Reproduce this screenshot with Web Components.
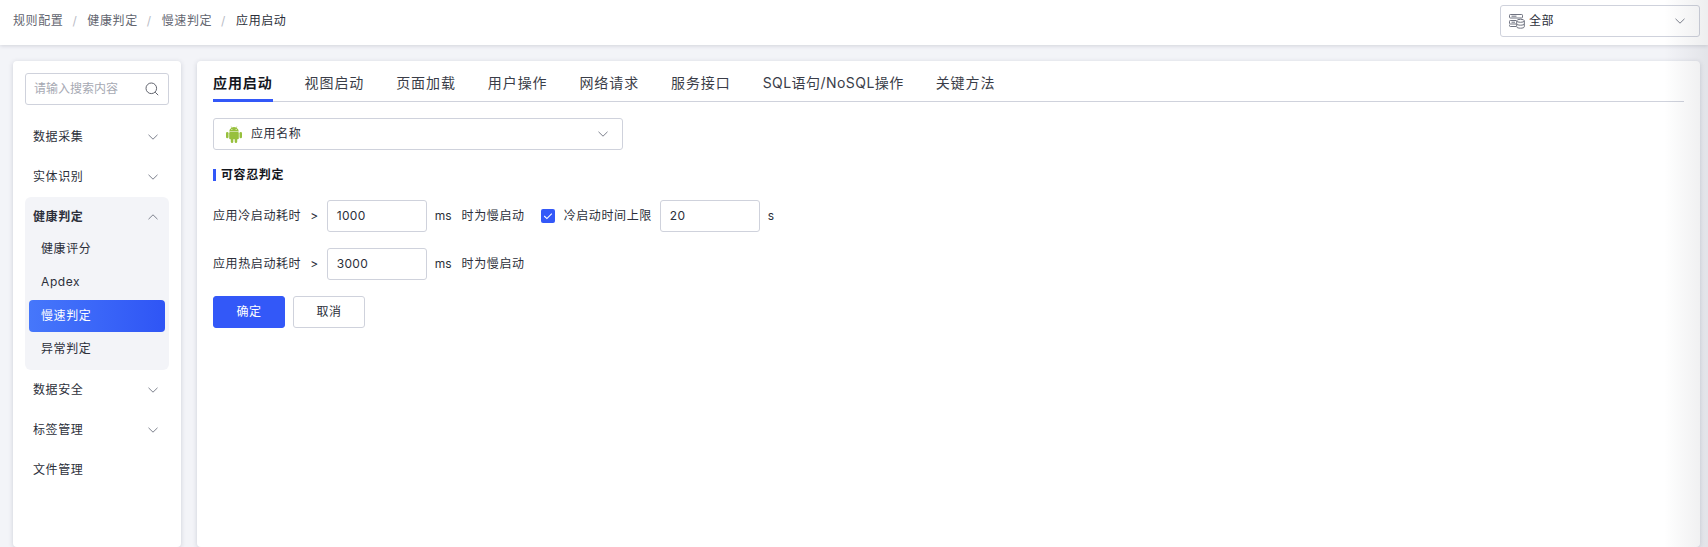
<!DOCTYPE html>
<html lang="zh-CN">
  <head>
    <meta charset="UTF-8">
    <title>应用启动</title>
    <style>
      html, body {
        margin: 0;
        height: 100%;
        overflow: hidden;
      }

      body {
        position: relative;
        background: #f3f4f8;
        color: #2c2f3a;
        font: 12px/16px Inter, "Noto Sans CJK SC", sans-serif;
      }

      /* soft shade down the right edge of the window */
      body::after {
        content: "";
        position: absolute;
        top: 0;
        right: 0;
        bottom: 0;
        width: 44px;
        background: linear-gradient(90deg, rgba(30, 34, 50, 0), rgba(30, 34, 50, 0.08));
        pointer-events: none;
      }

      .layout {
        display: flex;
        gap: 16px;
        padding: 16px 8px 0 13px;
        height: 486px;
        overflow: hidden;
      }
    </style>
  </head>

  <body>
    <top-bar>
      <crumb-item>规则配置</crumb-item>
      <crumb-item>健康判定</crumb-item>
      <crumb-item>慢速判定</crumb-item>
      <crumb-item current>应用启动</crumb-item>
    </top-bar>

    <div class="layout">
      <side-nav>
        <nav-item arrow="down">数据采集</nav-item>
        <nav-item arrow="down">实体识别</nav-item>
        <nav-group label="健康判定">
          <nav-sub>健康评分</nav-sub>
          <nav-sub>Apdex</nav-sub>
          <nav-sub active>慢速判定</nav-sub>
          <nav-sub>异常判定</nav-sub>
        </nav-group>
        <nav-item arrow="down">数据安全</nav-item>
        <nav-item arrow="down">标签管理</nav-item>
        <nav-item>文件管理</nav-item>
      </side-nav>

      <rule-panel></rule-panel>
    </div>

    <script>
      const CHEVRON_DOWN = '<svg width="14" height="14" viewBox="0 0 14 14" fill="none" stroke="#7d818d" stroke-width="1"><path d="M2.5 4.8 7 9.2l4.5-4.4"/></svg>';
      const CHEVRON_UP = '<svg width="14" height="14" viewBox="0 0 14 14" fill="none" stroke="#7d818d" stroke-width="1"><path d="M2.5 9.2 7 4.8l4.5 4.4"/></svg>';

      class TopBar extends HTMLElement {
        constructor() {
          super();
          this.attachShadow({ mode: 'open' }).innerHTML = `
            <style>
              :host {
                display: flex;
                position: relative;
                align-items: center;
                justify-content: space-between;
                height: 45px;
                box-sizing: border-box;
                padding: 0 8px 4px 13px;
                background: #fff;
                box-shadow: 0 1px 4px rgba(40, 44, 70, 0.16);
              }
              .crumbs { display: flex; }
              .scope {
                display: flex;
                align-items: center;
                width: 200px;
                height: 32px;
                box-sizing: border-box;
                padding: 0 12px 0 8px;
                border: 1px solid #cfd2dc;
                border-radius: 3px;
                letter-spacing: 0.6px;
              }
              .scope span { flex: 1; margin-left: 4px; }
              svg { display: block; }
            </style>
            <div class="crumbs"><slot></slot></div>
            <div class="scope">
              <svg width="16" height="16" viewBox="0 0 16 16" fill="none" stroke="#6f7380" stroke-width="1">
                <rect x="0.5" y="1.5" width="13" height="3.5" rx="0.8"/>
                <path d="M2.5 3.2h5"/>
                <path d="M7 7.5H1.3a.8.8 0 0 0-.8.8v1.9c0 .4.4.8.8.8H7"/>
                <path d="M2.5 9.2h3.5"/>
                <path d="M7 13.5H1.3a.8.8 0 0 1-.8-.8v-1"/>
                <ellipse cx="11.5" cy="7.8" rx="3.8" ry="1.5"/>
                <path d="M7.7 7.8v6c0 .8 1.7 1.4 3.8 1.4s3.8-.6 3.8-1.4v-6M7.7 10.8c0 .8 1.7 1.4 3.8 1.4s3.8-.6 3.8-1.4"/>
              </svg>
              <span>全部</span>
              ${CHEVRON_DOWN}
            </div>`;
        }
      }

      class CrumbItem extends HTMLElement {
        constructor() {
          super();
          this.attachShadow({ mode: 'open' }).innerHTML = `
            <style>
              :host { display: inline-flex; color: #62656f; letter-spacing: 0.6px; }
              :host([current]) { color: #2c2f3a; }
              i { font-style: normal; color: #b9bcc6; margin: 0 10px 0 9px; }
              :host([current]) i { display: none; }
            </style>
            <slot></slot><i>/</i>`;
        }
      }

      class SideNav extends HTMLElement {
        constructor() {
          super();
          this.attachShadow({ mode: 'open' }).innerHTML = `
            <style>
              :host {
                display: block;
                flex: none;
                width: 168px;
                box-sizing: border-box;
                padding: 12px;
                background: #fff;
                border-radius: 4px;
                box-shadow: 0 1px 5px rgba(40, 44, 70, 0.18);
              }
              .search {
                display: flex;
                align-items: center;
                justify-content: space-between;
                height: 32px;
                box-sizing: border-box;
                padding: 0 9px 0 8px;
                margin-bottom: 12px;
                border: 1px solid #cfd2dc;
                border-radius: 3px;
                color: #a6a9b3;
              }
              svg { display: block; }
            </style>
            <div class="search">
              <span>请输入搜索内容</span>
              <svg width="14" height="14" viewBox="0 0 14 14" fill="none" stroke="#62656f" stroke-width="1"><circle cx="6.3" cy="6.3" r="5.3"/><path d="m10.2 10.2 3 3"/></svg>
            </div>
            <slot></slot>`;
        }
      }

      class NavItem extends HTMLElement {
        constructor() {
          super();
          const arrow = this.getAttribute('arrow') === 'down' ? CHEVRON_DOWN : '';
          this.attachShadow({ mode: 'open' }).innerHTML = `
            <style>
              :host {
                display: flex;
                align-items: center;
                justify-content: space-between;
                height: 40px;
                padding: 0 9px 0 8px;
                letter-spacing: 0.6px;
              }
            </style>
            <slot></slot>${arrow}`;
        }
      }

      class NavGroup extends HTMLElement {
        constructor() {
          super();
          this.attachShadow({ mode: 'open' }).innerHTML = `
            <style>
              :host {
                display: block;
                padding-bottom: 4px;
                background: #f3f4f8;
                border-radius: 6px;
              }
              .head {
                display: flex;
                align-items: center;
                justify-content: space-between;
                height: 40px;
                margin-bottom: -4px;
                padding: 0 9px 0 8px;
                font-weight: 700;
                letter-spacing: 0.6px;
              }
            </style>
            <div class="head"><span>${this.getAttribute('label')}</span>${CHEVRON_UP}</div>
            <slot></slot>`;
        }
      }

      class NavSub extends HTMLElement {
        constructor() {
          super();
          this.attachShadow({ mode: 'open' }).innerHTML = `
            <style>
              :host {
                display: flex;
                align-items: center;
                height: 32px;
                margin: 0 4px 1.33px;
                padding-left: 12px;
                border-radius: 4px;
                letter-spacing: 0.6px;
              }
              :host([active]) {
                color: #fff;
                background: linear-gradient(90deg, #4677fb, #2f55f5);
              }
            </style>
            <slot></slot>`;
        }
      }

      class TabItem extends HTMLElement {
        constructor() {
          super();
          this.attachShadow({ mode: 'open' }).innerHTML = `
            <style>
              :host {
                display: block;
                height: 41px;
                box-sizing: border-box;
                padding-top: 13px;
                color: #3a3d48;
                font-size: 14px;
                line-height: 18px;
                letter-spacing: 0.9px;
              }
              :host([active]) {
                color: #14161d;
                font-weight: 700;
                border-bottom: 3px solid #3358f8;
              }
            </style>
            <slot></slot>`;
        }
      }

      class FieldInput extends HTMLElement {
        constructor() {
          super();
          this.attachShadow({ mode: 'open' }).innerHTML = `
            <style>
              :host {
                display: flex;
                align-items: center;
                width: 100px;
                height: 32px;
                box-sizing: border-box;
                padding-left: 9px;
                border: 1px solid #cfd2dc;
                border-radius: 3px;
                letter-spacing: 0.3px;
              }
            </style>
            <slot></slot>`;
        }
      }

      class PlainButton extends HTMLElement {
        constructor() {
          super();
          this.attachShadow({ mode: 'open' }).innerHTML = `
            <style>
              :host {
                display: flex;
                align-items: center;
                justify-content: center;
                width: 72px;
                height: 32px;
                box-sizing: border-box;
                border: 1px solid #cfd2dc;
                border-radius: 3px;
                letter-spacing: 0.6px;
              }
              :host([primary]) {
                color: #fff;
                background: #3358f8;
                border-color: #3358f8;
              }
            </style>
            <slot></slot>`;
        }
      }

      class RulePanel extends HTMLElement {
        constructor() {
          super();
          this.attachShadow({ mode: 'open' }).innerHTML = `
            <style>
              :host {
                display: block;
                flex: 1;
                box-sizing: border-box;
                padding: 0 16px;
                background: #fff;
                border-radius: 4px;
                box-shadow: 0 1px 5px rgba(40, 44, 70, 0.18);
              }
              .tabs {
                display: flex;
                align-items: flex-start;
                gap: 32px;
                height: 41px;
                box-sizing: border-box;
                border-bottom: 1px solid #cfd2dc;
              }
              .app {
                display: flex;
                align-items: center;
                width: 410px;
                height: 32px;
                box-sizing: border-box;
                margin-top: 16px;
                padding: 0 12px;
                border: 1px solid #cfd2dc;
                border-radius: 3px;
                letter-spacing: 0.6px;
              }
              .app span { flex: 1; margin-left: 9px; }
              .title {
                height: 12px;
                margin-top: 19px;
                padding-left: 5px;
                border-left: 3px solid #3358f8;
                color: #14161d;
                font-weight: 700;
                line-height: 12px;
                letter-spacing: 0.6px;
              }
              .row {
                display: flex;
                align-items: center;
                height: 32px;
                margin-top: 16px;
                letter-spacing: 0.6px;
                white-space: nowrap;
              }
              .title + .row { margin-top: 19px; }
              .gt { margin: 0 8px 0 9px; }
              .unit { margin: 0 10px 0 8px; letter-spacing: 0; }
              .box {
                display: flex;
                align-items: center;
                justify-content: center;
                width: 14px;
                height: 14px;
                margin: 0 9px 0 16px;
                background: #3358f8;
                border-radius: 2px;
              }
              .actions { display: flex; gap: 8px; margin-top: 16px; }
              svg { display: block; }
            </style>
            <div class="tabs">
              <tab-item active>应用启动</tab-item>
              <tab-item>视图启动</tab-item>
              <tab-item>页面加载</tab-item>
              <tab-item>用户操作</tab-item>
              <tab-item>网络请求</tab-item>
              <tab-item>服务接口</tab-item>
              <tab-item style="letter-spacing:0.45px">SQL语句/NoSQL操作</tab-item>
              <tab-item>关键方法</tab-item>
            </div>
            <div class="app">
              <svg width="16" height="18" viewBox="0 0 16 18" fill="#97c03d">
                <path d="M3.2 6.4a4.8 4.8 0 0 1 2.3-3.6L4.7 1.4l.3-.2.9 1.4a4.9 4.9 0 0 1 4.2 0l.9-1.4.3.2-.8 1.4a4.8 4.8 0 0 1 2.3 3.6z"/>
                <rect x="3.2" y="6.9" width="9.6" height="7.4" rx="1"/>
                <rect x="0" y="6.9" width="2.5" height="6.4" rx="1.25"/>
                <rect x="13.5" y="6.9" width="2.5" height="6.4" rx="1.25"/>
                <rect x="4.8" y="12" width="2.5" height="6" rx="1.25"/>
                <rect x="8.7" y="12" width="2.5" height="6" rx="1.25"/>
                <circle cx="5.9" cy="4.5" r="0.5" fill="#fff"/>
                <circle cx="10.1" cy="4.5" r="0.5" fill="#fff"/>
              </svg>
              <span>应用名称</span>
              ${CHEVRON_DOWN}
            </div>
            <div class="title">可容忍判定</div>
            <div class="row">
              <span>应用冷启动耗时</span><span class="gt">&gt;</span>
              <field-input>1000</field-input>
              <span class="unit">ms</span><span>时为慢启动</span>
              <span class="box"><svg width="10" height="10" viewBox="0 0 10 10" fill="none" stroke="#fff" stroke-width="1.1"><path d="m1.2 5 2.7 2.6 4.9-5"/></svg></span>
              <span>冷启动时间上限</span>
              <field-input style="margin-left:8px">20</field-input>
              <span class="unit">s</span>
            </div>
            <div class="row">
              <span>应用热启动耗时</span><span class="gt">&gt;</span>
              <field-input>3000</field-input>
              <span class="unit">ms</span><span>时为慢启动</span>
            </div>
            <div class="actions">
              <plain-button primary>确定</plain-button>
              <plain-button>取消</plain-button>
            </div>`;
        }
      }

      customElements.define('top-bar', TopBar);
      customElements.define('crumb-item', CrumbItem);
      customElements.define('side-nav', SideNav);
      customElements.define('nav-item', NavItem);
      customElements.define('nav-group', NavGroup);
      customElements.define('nav-sub', NavSub);
      customElements.define('tab-item', TabItem);
      customElements.define('field-input', FieldInput);
      customElements.define('plain-button', PlainButton);
      customElements.define('rule-panel', RulePanel);
    </script>
  </body>
</html>
